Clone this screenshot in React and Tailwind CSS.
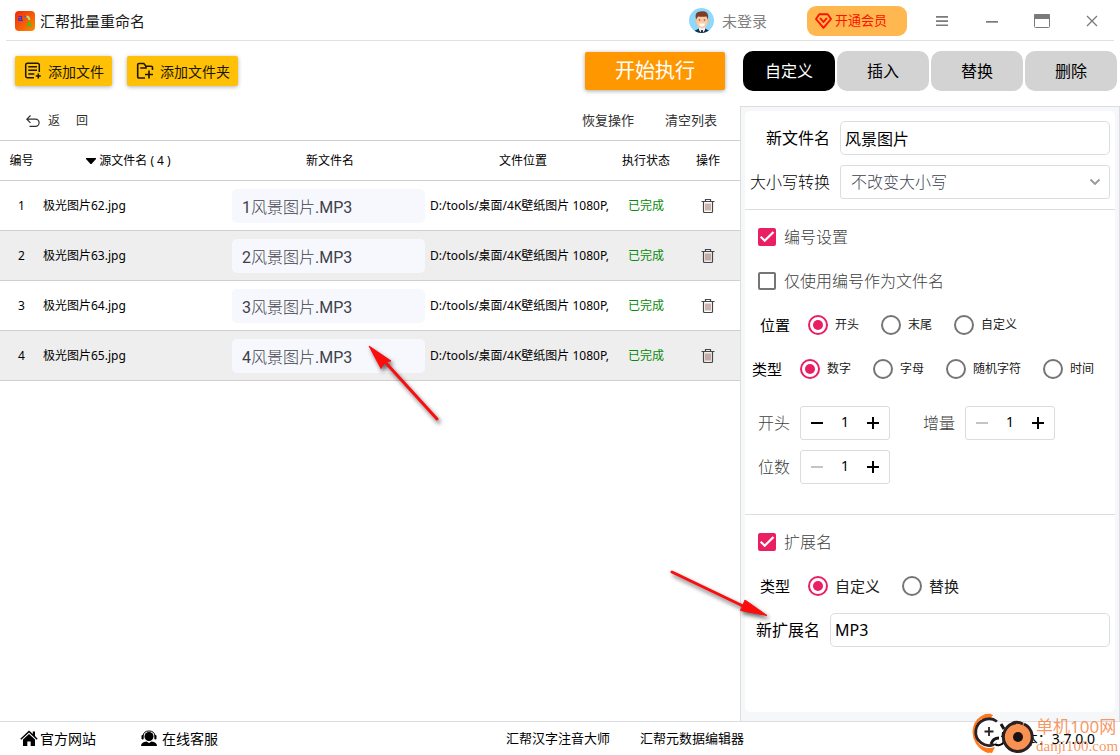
import React, { useState } from "react";

const FILES = [
    { id: 1, source: "极光图片62.jpg", target: "1风景图片.MP3" },
    { id: 2, source: "极光图片63.jpg", target: "2风景图片.MP3" },
    { id: 3, source: "极光图片64.jpg", target: "3风景图片.MP3" },
    { id: 4, source: "极光图片65.jpg", target: "4风景图片.MP3" },
];

const TABS = ["自定义", "插入", "替换", "删除"];

function Logo() {
    return (
        <svg width="20" height="20" viewBox="0 0 20 20" aria-hidden="true">
            <defs>
                <linearGradient id="logo" x1="0" y1="0" x2="1" y2="1">
                    <stop offset="0" stopColor="#f0280c" />
                    <stop offset="1" stopColor="#ff8a00" />
                </linearGradient>
            </defs>
            <rect width="20" height="20" rx="4" fill="url(#logo)" />
            <path d="M3.5 5.5h3v4h-2.5q-1-1 0-2h2.500M6.500 9.500h1.500" fill="none" stroke="#3535d8" strokeWidth="1.200" />
            <path d="M9 5.500h2" stroke="#3b6fe0" strokeWidth="1.400" />
            <path d="M11.500 5.500q2.500 0 3 3.500" fill="none" stroke="#a8e86a" strokeWidth="1.800" />
            <path d="M12 16l2-5 2.500 5M12.500 14h3.500" fill="none" stroke="#3cc41c" strokeWidth="1.300" />
        </svg>
    );
}

function Avatar() {
    return (
        <svg width="26" height="26" viewBox="0 0 26 26" aria-hidden="true">
            <defs>
                <clipPath id="face">
                    <circle cx="12.500" cy="12.500" r="12.500" />
                </clipPath>
            </defs>
            <g clipPath="url(#face)">
                <rect width="26" height="26" fill="#8ed8fb" />
                <path d="M5 26v-3l5-2.500h6l5 2.500v3z" fill="#173350" />
                <path d="M10 18h6v4l-3 4-3-4z" fill="#f3f6f8" />
                <path d="M12.200 22h1.600l.7 4h-3z" fill="#173350" />
                <circle cx="7.300" cy="13" r="1.500" fill="#f5b68c" />
                <circle cx="18.700" cy="13" r="1.500" fill="#f5b68c" />
                <path d="M7.500 8h11v7q-1 5-5.500 5.500Q8.500 20 7.500 15z" fill="#fbc9a2" />
                <path d="M7 11.500Q5 4 11 3.500q7-1.500 8 3.500.5 2-.200 4.500l-1.300-3q-5 .5-8.500 0z" fill="#7c3d28" />
                <path d="M9.800 12h1.400M14.800 12h1.400" stroke="#4a2a20" strokeWidth="1.200" />
                <path d="M10 15.500h6q-.5 3-3 3t-3-3z" fill="#fff" />
            </g>
        </svg>
    );
}

function AddFileIcon() {
    return (
        <svg width="18" height="18" viewBox="0 0 18 18" fill="none" stroke="#1c1600" strokeWidth="1.500" aria-hidden="true">
            <path d="M15.300 10V3a1.800 1.800 0 0 0-1.800-1.800H3.500A1.800 1.800 0 0 0 1.700 3v11a1.800 1.800 0 0 0 1.800 1.800H10" />
            <path d="M4.300 4.700h8.700M4.300 8.300h8.700M4.300 12h6" />
            <path d="M14.300 11.500v5M11.800 14h5" />
        </svg>
    );
}

function AddFolderIcon() {
    return (
        <svg width="18" height="18" viewBox="0 0 18 18" fill="none" stroke="#1c1600" strokeWidth="1.600" aria-hidden="true">
            <path d="M9 16H3a1.300 1.300 0 0 1-1.300-1.300V2.800A1.300 1.300 0 0 1 3 1.500h4.800L10 4.200h5.200a1.300 1.300 0 0 1 1.300 1.300V8" />
            <path d="M10 4.200V6H4.300" />
            <path d="M13 8.500v8M9 12.500h8" />
        </svg>
    );
}

function TrashIcon() {
    return (
        <svg width="14" height="16" viewBox="0 0 14 16" fill="none" stroke="#45454a" aria-hidden="true">
            <path d="M.5 3.500h13M4.500 3.500v-2h5v2M2.500 3.500v10q0 1 1 1h7q1 0 1-1v-10" strokeWidth="1.200" />
            <path d="M5 5.500v7M7 5.500v7M9 5.500v7" stroke="#9a6a5a" />
        </svg>
    );
}

function TitleBar() {
    return (
        <header>
            <div className="flex h-10 items-center pl-[15px] pr-[3px] pt-px">
                <Logo />
                <h1 className="ml-[5px] text-[15px] leading-5 text-[#1a1a1a]">汇帮批量重命名</h1>
                <div className="ml-auto flex items-center">
                    <Avatar />
                    <a href="#login" className="ml-[7px] text-[15px] leading-5 text-[#808080]">未登录</a>
                    <button
                        type="button"
                        className="ml-10 flex h-[30px] w-[100px] items-center gap-[3px] rounded-[9px] bg-[#ffb84f] pl-2 text-[13px] text-[#ff1100]"
                    >
                        <svg width="17" height="16" viewBox="0 0 17 16" fill="none" stroke="currentColor" strokeWidth="1.900" strokeLinejoin="round" aria-hidden="true">
                            <path d="M4.300 1.200h8.400l3.300 4.800-7.500 8.800L1 6z" />
                            <path d="M5.500 5.500l3 3.500 3-3.500" strokeLinecap="round" />
                        </svg>
                        开通会员
                    </button>
                    <div className="ml-[10px] flex text-[#7a7a7a]">
                        <button type="button" aria-label="菜单" className="flex h-8 w-[50px] items-center justify-center">
                            <svg width="12" height="12" viewBox="0 0 12 12" fill="currentColor">
                                <path d="M0 1h12v1.700H0zM0 5.200h12v1.700H0zM0 9.400h12v1.700H0z" />
                            </svg>
                        </button>
                        <button type="button" aria-label="最小化" className="flex h-8 w-[50px] items-center justify-center">
                            <svg width="12" height="12" viewBox="0 0 12 12" fill="currentColor">
                                <path d="M0 6h12v1.700H0z" />
                            </svg>
                        </button>
                        <button type="button" aria-label="最大化" className="flex h-8 w-[50px] items-center justify-center">
                            <svg width="16" height="14" viewBox="0 0 16 14">
                                <rect x=".5" y=".5" width="15" height="13" rx="1" fill="#fff" stroke="currentColor" />
                                <path d="M0 1q0-1 1-1h14q1 0 1 1v4H0z" fill="currentColor" />
                            </svg>
                        </button>
                        <button type="button" aria-label="关闭" className="flex h-8 w-[50px] items-center justify-center">
                            <svg width="12" height="12" viewBox="0 0 12 12" stroke="currentColor" strokeWidth="1.300">
                                <path d="M1 1l10 10M11 1L1 11" />
                            </svg>
                        </button>
                    </div>
                </div>
            </div>
            <div className="mx-[6px] border-b border-[#e2e2e2]" />
        </header>
    );
}

function FileTable() {
    return (
        <table className="w-full table-fixed border-separate border-spacing-0 border-t border-[#cfcfcf] text-[12px] leading-4 text-black">
            <colgroup>
                <col className="w-[43px]" />
                <col />
                <col className="w-[200px]" />
                <col className="w-[186px]" />
                <col className="w-[60px]" />
                <col className="w-[64px]" />
            </colgroup>
            <thead>
                <tr className="[&>th]:h-10 [&>th]:border-b [&>th]:border-[#cfcfcf] [&>th]:p-0 [&>th]:pt-px [&>th]:font-normal">
                    <th>编号</th>
                    <th>
                        <span className="flex items-center justify-center gap-[3px] pr-4">
                            <svg width="10" height="6" viewBox="0 0 10 6" aria-hidden="true">
                                <path d="M0 0h10v1L5.500 6h-1L0 1z" />
                            </svg>
                            源文件名 ( 4 )
                        </span>
                    </th>
                    <th>新文件名</th>
                    <th>文件位置</th>
                    <th>执行状态</th>
                    <th>操作</th>
                </tr>
            </thead>
            <tbody>
                {FILES.map((file) => (
                    <tr key={file.id} className="even:bg-[#eeeeee] [&>td]:h-[50px] [&>td]:border-b [&>td]:border-[#cfcfcf] [&>td]:p-0 [&>td]:pt-px">
                        <td className="text-center">{file.id}</td>
                        <td>{file.source}</td>
                        <td>
                            <input
                                aria-label={`新文件名 ${file.id}`}
                                defaultValue={file.target}
                                className="ml-[2px] block h-[34px] w-[193px] rounded-[5px] bg-[#f6f8fd] px-[10px] pb-px font-[Roboto,'Noto_Sans_CJK_SC_Light','Noto_Sans_CJK_SC',sans-serif] text-[16px] font-normal text-[#404048]"
                            />
                        </td>
                        <td>
                            <div className="w-[184px] overflow-hidden whitespace-nowrap">D:/tools/桌面/4K壁纸图片 1080P,</div>
                        </td>
                        <td className="text-center text-[#078a07]">已完成</td>
                        <td>
                            <button type="button" aria-label={`删除 ${file.source}`} className="mx-auto flex">
                                <TrashIcon />
                            </button>
                        </td>
                    </tr>
                ))}
            </tbody>
        </table>
    );
}

function Check({ label, defaultChecked }) {
    return (
        <label className="flex h-11 items-center gap-2 pl-[13px] text-[16px] font-light text-[#404040]">
            <span className="relative flex">
                <input
                    type="checkbox"
                    defaultChecked={defaultChecked}
                    className="peer size-[18px] appearance-none rounded-[2px] border-2 border-[#757575] checked:border-[#e91e63] checked:bg-[#e91e63]"
                />
                <svg className="pointer-events-none absolute inset-0 hidden peer-checked:block" width="18" height="18" viewBox="0 0 18 18" fill="none" stroke="#fff" strokeWidth="2.200">
                    <path d="M2.700 8.700l4 4L15.500 4" />
                </svg>
            </span>
            {label}
        </label>
    );
}

function RadioRow({ title, name, options, className, textClass }) {
    return (
        <div role="radiogroup" aria-label={title} className={`flex h-11 items-center ${className}`}>
            <span className="mr-[18px] text-[15px] text-black">{title}</span>
            <div className="flex gap-[22px]">
                {options.map((option, i) => (
                    <label key={option} className={`flex items-center text-[#202020] ${textClass}`}>
                        <input
                            type="radio"
                            name={name}
                            defaultChecked={i === 0}
                            className="grid size-5 appearance-none place-content-center rounded-full border-2 border-[#757575] checked:border-[#e91e63] checked:before:size-[10px] checked:before:rounded-full checked:before:bg-[#e91e63] checked:before:content-['']"
                        />
                        {option}
                    </label>
                ))}
            </div>
        </div>
    );
}

function Stepper({ id, label }) {
    const [value, setValue] = useState(1);
    // 开头 may go down to 0, the others stop at 1
    const atMin = value <= (id === "start" ? 0 : 1);

    return (
        <div className="flex h-11 items-center">
            <label htmlFor={id} className="mr-[10px] text-[16px] font-light text-[#404040]">{label}</label>
            <div className="flex h-[34px] w-[90px] items-center rounded-[3px] border border-[#dcdcdc]">
                <button
                    type="button"
                    aria-label={`${label} 减少`}
                    disabled={atMin}
                    onClick={() => setValue(value - 1)}
                    className="flex h-8 w-8 items-center justify-center text-black disabled:text-[#c4c4c4]"
                >
                    <svg width="12" height="12" viewBox="0 0 12 12" fill="currentColor">
                        <path d="M0 5h12v2H0z" />
                    </svg>
                </button>
                <input
                    id={id}
                    value={value}
                    onChange={(e) => setValue(Number(e.target.value) || 0)}
                    className="h-8 w-6 pb-[3px] text-center text-[14px] text-black"
                />
                <button
                    type="button"
                    aria-label={`${label} 增加`}
                    onClick={() => setValue(value + 1)}
                    className="flex h-8 w-8 items-center justify-center text-black"
                >
                    <svg width="12" height="12" viewBox="0 0 12 12" fill="currentColor">
                        <path d="M0 5h5V0h2v5h5v2H7v5H5V7H0z" />
                    </svg>
                </button>
            </div>
        </div>
    );
}

function SettingsPanel() {
    return (
        <div className="flex flex-1 border border-b-0 border-[#dcdde0] bg-[#f5f7f9] px-1 pb-[9px] pt-1">
            <form className="flex-1 rounded-[5px] bg-white">
                <div className="border-b border-[#dcdde0] py-[5px] pr-[5px]">
                    <div className="flex h-11 items-center">
                        <label htmlFor="name" className="mr-[10px] w-[85px] text-right text-[16px] text-black">新文件名</label>
                        <input id="name" defaultValue="风景图片" className="h-[34px] min-w-0 flex-1 rounded-[5px] border border-[#dcdde0] px-1 text-[16px] text-black" />
                    </div>
                    <div className="flex h-11 items-center">
                        <label htmlFor="case" className="mr-[10px] w-[85px] text-right text-[16px] font-light text-black">大小写转换</label>
                        <div className="relative flex flex-1">
                            <select id="case" className="h-[34px] w-full appearance-none rounded-[3px] border border-[#dcdde0] bg-white pl-[10px] text-[16px] font-light text-[#3c4152]">
                                <option>不改变大小写</option>
                            </select>
                            <svg className="pointer-events-none absolute right-[9px] top-[13px]" width="12" height="8" viewBox="0 0 12 8" fill="none" stroke="#9a9a9a" strokeWidth="1.900">
                                <path d="M1.500 1.500L6 6l4.500-4.500" />
                            </svg>
                        </div>
                    </div>
                </div>
                <div className="border-b border-[#dcdde0] pb-[25px] pt-[5px]">
                    <Check label="编号设置" defaultChecked />
                    <Check label="仅使用编号作为文件名" />
                    <RadioRow title="位置" name="position" options={["开头", "末尾", "自定义"]} className="pl-[15px]" textClass="gap-[7px] text-[12px]" />
                    <RadioRow title="类型" name="kind" options={["数字", "字母", "随机字符", "时间"]} className="pl-[7px]" textClass="gap-[7px] text-[12px]" />
                    <div className="flex gap-[33px] pl-[13px] pt-[10px]">
                        <Stepper id="start" label="开头" />
                        <Stepper id="step" label="增量" />
                    </div>
                    <div className="pl-[13px]">
                        <Stepper id="digits" label="位数" />
                    </div>
                </div>
                <div className="pr-[5px] pt-[5px]">
                    <Check label="扩展名" defaultChecked />
                    <RadioRow title="类型" name="extension" options={["自定义", "替换"]} className="pl-[15px]" textClass="gap-[7px] text-[15px]" />
                    <div className="flex h-11 items-center">
                        <label htmlFor="ext" className="mr-[10px] w-[75px] text-right text-[16px] text-black">新扩展名</label>
                        <input id="ext" defaultValue="MP3" className="h-[34px] min-w-0 flex-1 rounded-[5px] border border-[#dcdde0] px-1 text-[16px] text-black" />
                    </div>
                </div>
            </form>
        </div>
    );
}

function Footer() {
    return (
        <footer className="relative flex h-[34px] border-t border-[#dcdde0] bg-white text-black">
            <div className="flex flex-1 items-center justify-between pl-5">
                <div className="flex items-center gap-11 text-[14px]">
                    <a href="#home" className="flex items-center gap-[2px]">
                        <svg width="18" height="17" viewBox="0 0 18 17" aria-hidden="true">
                            <path d="M9 .5L.3 8.700l1 1L9 2.600l7.700 7.100 1-1L15 6.100V1.500h-2.200v2.600z" />
                            <path d="M9 4L3 9.500V16h4.300v-4.500h3.400V16H15V9.500z" />
                        </svg>
                        官方网站
                    </a>
                    <a href="#service" className="flex items-center gap-1">
                        <svg width="18" height="17" viewBox="0 0 18 17" aria-hidden="true">
                            <circle cx="9" cy="6.500" r="4.500" />
                            <path d="M3 6Q3.500 1 9 1t6 5" fill="none" stroke="#000" strokeWidth="1" />
                            <rect x="1.500" y="5" width="2.200" height="4.500" rx="1" />
                            <rect x="14.300" y="5" width="2.200" height="4.500" rx="1" />
                            <path d="M1 16q0-4 5.500-4.500L9 13l2.500-1.500Q17 12 17 16z" />
                        </svg>
                        在线客服
                    </a>
                </div>
                <div className="flex gap-[30px] text-[13px]">
                    <a href="#pinyin">汇帮汉字注音大师</a>
                    <a href="#metadata">汇帮元数据编辑器</a>
                </div>
            </div>
            <div className="flex w-[376px] items-center justify-end gap-1 pr-[25px] text-[14px]">
                <svg width="16" height="16" viewBox="0 0 16 16" fill="none" stroke="#000" strokeWidth="2" aria-hidden="true">
                    <path d="M2 6a6 6 0 0 1 11-1M14 10a6 6 0 0 1-11 1M13 1v4H9M3 15v-4h4" />
                </svg>
                <span className="whitespace-nowrap">版本：3.7.0.0</span>
            </div>
            <Watermark />
        </footer>
    );
}

function Watermark() {
    return (
        <div className="pointer-events-none absolute bottom-0 right-0 flex items-end text-[#f58549]/85">
            <svg width="64" height="44" viewBox="0 0 64 44" fill="none" aria-hidden="true">
                <path d="M19 4Q8 4 3.500 13-.5 23 5 32q5 7 12 9" stroke="#ff7a1a" strokeWidth="2.500" />
                <path d="M10 5Q15 1 21 4l-2 3Q14 5 10 9zM8 33q5 6 15 3l-3 6q-7 0-12-9z" fill="#ff7a1a" />
                <circle cx="17" cy="21" r="13" fill="#fff" />
                <path d="M25 10.500A13.300 13.300 0 1 0 22 33.500" stroke="#2b2022" strokeWidth="2.800" />
                <path d="M17 16v9M12.500 20.500h9" stroke="#2b2022" strokeWidth="1.800" />
                <path d="M29 13l3 5M19 33q2-6 8-6" stroke="#151515" strokeWidth="3" />
                <circle cx="46" cy="26" r="14.500" fill="#f99150" />
                <path d="M44 11.700a14.400 14.400 0 1 0 8 1.300" stroke="#2b2022" strokeWidth="3" />
                <path d="M40 12.500Q45 10 51 13" stroke="#2b2022" strokeWidth="3" />
                <circle cx="46" cy="26" r="5" fill="#191113" />
            </svg>
            <div className="w-[84px] whitespace-nowrap">
                <div className="text-[17px] leading-5">单机100网</div>
                <div className="font-['Liberation_Serif',serif] text-[15px] leading-[18px]">danji100.com</div>
            </div>
        </div>
    );
}

function Arrows() {
    return (
        <svg
            className="pointer-events-none absolute left-0 top-0 drop-shadow-[2px_3px_2px_rgba(0,0,0,0.6)]"
            width="780"
            height="640"
            viewBox="0 0 780 640"
            fill="#fb0d0d"
            stroke="#fb0d0d"
            aria-hidden="true"
        >
            <path d="M386 363L437 419M743 606L672 572" strokeWidth="3" strokeLinecap="round" />
            <path d="M369 346l12 22.500 4-6.500 6-1zM767 615.500L745 600l-2.500 6-2 4.500z" strokeWidth="1" />
        </svg>
    );
}

export default function App() {
    const [tab, setTab] = useState("自定义");

    return (
        <div className="relative flex min-h-screen flex-col bg-white font-['Noto_Sans','Noto_Sans_CJK_SC',sans-serif]">
            <TitleBar />
            <main className="flex flex-1">
                <section className="min-w-0 flex-1">
                    <div className="flex h-[60px] items-center pl-[15px] pr-[15px]">
                        <button type="button" className="flex h-[30px] items-center gap-[6px] rounded-[2px] bg-[#ffc107] px-[9px] pr-2 text-[14px] text-[#1c1600] shadow-[0_1px_4px_rgba(0,0,0,0.3)]">
                            <AddFileIcon />
                            添加文件
                        </button>
                        <button type="button" className="ml-[15px] flex h-[30px] items-center gap-[6px] rounded-[2px] bg-[#ffc107] px-[9px] pr-2 text-[14px] text-[#1c1600] shadow-[0_1px_4px_rgba(0,0,0,0.3)]">
                            <AddFolderIcon />
                            添加文件夹
                        </button>
                        <button type="button" className="ml-auto h-[38px] w-[140px] rounded-[2px] bg-[#ff9800] text-[20px] text-white shadow-[0_1px_4px_rgba(0,0,0,0.35)]">
                            开始执行
                        </button>
                    </div>
                    <div className="flex h-[39px] items-center pl-[26px] pr-[23px] pt-px text-[#303030]">
                        <button type="button" className="flex items-center gap-2 text-[12px]">
                            <svg width="14" height="12" viewBox="0 0 14 12" fill="none" stroke="currentColor" strokeWidth="1.200" aria-hidden="true">
                                <path d="M4.500.5L.8 4.200l3.700 3.700M.8 4.200h8.700a3.600 3.600 0 0 1 0 7.200H3.500" />
                            </svg>
                            <span>返</span>
                            <span className="ml-2">回</span>
                        </button>
                        <div className="ml-auto flex gap-[31px] text-[13px]">
                            <button type="button">恢复操作</button>
                            <button type="button">清空列表</button>
                        </div>
                    </div>
                    <FileTable />
                </section>
                <aside className="flex w-[380px] flex-col">
                    <div role="tablist" className="flex h-[65px] gap-[2px] pl-[3px] pr-[3px] pt-[10px]">
                        {TABS.map((item) => (
                            <button
                                key={item}
                                type="button"
                                role="tab"
                                aria-selected={tab === item}
                                onClick={() => setTab(item)}
                                className="h-10 flex-1 rounded-[10px] bg-[#d3d3d3] text-[16px] text-black aria-selected:bg-black aria-selected:text-white"
                            >
                                {item}
                            </button>
                        ))}
                    </div>
                    <SettingsPanel />
                </aside>
            </main>
            <Footer />
            <Arrows />
        </div>
    );
}
